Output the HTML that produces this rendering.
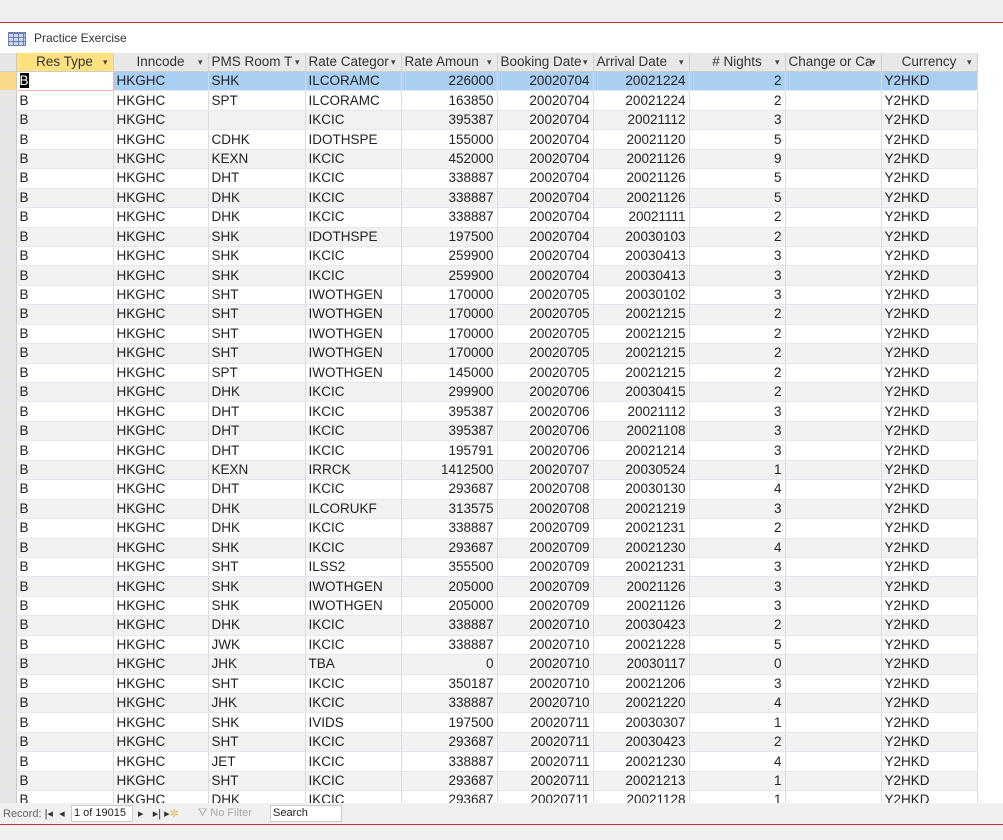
<!DOCTYPE html>
<html><head><meta charset="utf-8"><style>
body{margin:0;width:1003px;height:840px;background:#f0f0f0;font-family:"Liberation Sans",sans-serif;position:relative;overflow:hidden}
#top{position:absolute;left:0;top:0;width:1003px;height:22px;background:#efefef;border-bottom:1px solid #c4323a}
#title{position:absolute;left:0;top:23px;width:1003px;height:30px;background:#fff;border-bottom:1px solid #e3b8bb}
#title span{position:absolute;left:34px;top:8px;font-size:12px;color:#333}
#icon{position:absolute;left:8px;top:9px;width:16px;height:12px;border:1px solid #6a7fb0;background:repeating-linear-gradient(90deg,#c9d6ee 0 4px,#6a7fb0 4px 5px);}
#icon:after{content:"";position:absolute;left:0;top:0;right:0;bottom:0;background:repeating-linear-gradient(0deg,transparent 0 3px,#6a7fb0 3px 4px)}
#grid{position:absolute;left:0;top:53px;width:1003px;height:750px;overflow:hidden;background:#fff}
table{border-collapse:collapse;table-layout:fixed;font-size:13.5px;color:#222}
td,th{height:18.45px;padding:0 3px;border-right:1px solid #d6dde8;border-bottom:1px solid #e4e8ee;white-space:nowrap;overflow:hidden;line-height:18px}
th{height:18px;font-weight:normal;background:#e8e8e8;border-bottom:1px solid #ccc;border-right:1px solid #d0d0d0;text-align:center;position:relative;font-size:13.5px;color:#333}
th:after{content:"▾";position:absolute;right:5px;top:0;font-size:9px;color:#444}
th.sel{background:#ffe27f}
th.rs:after{content:""}
td.rs,th.rs{background:#e6e6e6;padding:0;border-right:1px solid #c8c8c8}
tr:nth-child(even) td{background:#f2f2f2}
tr:nth-child(even) td.rs,tr:nth-child(odd) td.rs{background:#e6e6e6}
tr.s td{background:#a9d0f2!important}
tr.s td.rs{background:#fbd98b!important}
tr.s td.c1{background:#fff!important;border:1px solid #f2b7b7}
.r{text-align:right}
#status{position:absolute;left:0;top:803px;width:1003px;height:21px;background:#f0f0f0;border-bottom:1px solid #c4323a;font-size:11px;color:#666}
#status .t{position:absolute;top:4px}
#rec{position:absolute;left:71px;top:2px;width:58px;height:15px;background:#fff;border:1px solid #ccc;font-size:11px;color:#222;line-height:15px;padding-left:2px}
#srch{position:absolute;left:270px;top:2px;width:68px;height:15px;background:#fff;border:1px solid #ccc;font-size:11px;color:#222;line-height:15px;padding-left:2px}
#bot{position:absolute;left:0;top:825px;width:1003px;height:15px;background:#efefef}
</style></head><body>
<div id="top"></div>
<div id="title"><div id="icon"></div><span>Practice Exercise</span></div>
<div id="grid"><table>
<colgroup><col style="width:16px"><col style="width:97px"><col style="width:95px"><col style="width:97px"><col style="width:96px"><col style="width:96px"><col style="width:96px"><col style="width:96px"><col style="width:96px"><col style="width:96px"><col style="width:96px"></colgroup>
<tr><th class="rs"></th><th class="sel">Res Type</th><th>Inncode</th><th style="text-align:left">PMS Room T</th><th style="text-align:left">Rate Categor</th><th style="text-align:left">Rate Amoun</th><th style="text-align:left">Booking Date</th><th style="text-align:left">Arrival Date</th><th>#&nbsp;Nights</th><th style="text-align:left">Change or Ca</th><th>Currency</th></tr>
<tr class="s"><td class="rs"></td><td class="c1"><span style="background:#000;color:#fff">B</span></td><td>HKGHC</td><td>SHK</td><td>ILCORAMC</td><td class="r">226000</td><td class="r">20020704</td><td class="r">20021224</td><td class="r">2</td><td></td><td>Y2HKD</td></tr>
<tr><td class="rs"></td><td>B</td><td>HKGHC</td><td>SPT</td><td>ILCORAMC</td><td class="r">163850</td><td class="r">20020704</td><td class="r">20021224</td><td class="r">2</td><td></td><td>Y2HKD</td></tr>
<tr><td class="rs"></td><td>B</td><td>HKGHC</td><td></td><td>IKCIC</td><td class="r">395387</td><td class="r">20020704</td><td class="r">20021112</td><td class="r">3</td><td></td><td>Y2HKD</td></tr>
<tr><td class="rs"></td><td>B</td><td>HKGHC</td><td>CDHK</td><td>IDOTHSPE</td><td class="r">155000</td><td class="r">20020704</td><td class="r">20021120</td><td class="r">5</td><td></td><td>Y2HKD</td></tr>
<tr><td class="rs"></td><td>B</td><td>HKGHC</td><td>KEXN</td><td>IKCIC</td><td class="r">452000</td><td class="r">20020704</td><td class="r">20021126</td><td class="r">9</td><td></td><td>Y2HKD</td></tr>
<tr><td class="rs"></td><td>B</td><td>HKGHC</td><td>DHT</td><td>IKCIC</td><td class="r">338887</td><td class="r">20020704</td><td class="r">20021126</td><td class="r">5</td><td></td><td>Y2HKD</td></tr>
<tr><td class="rs"></td><td>B</td><td>HKGHC</td><td>DHK</td><td>IKCIC</td><td class="r">338887</td><td class="r">20020704</td><td class="r">20021126</td><td class="r">5</td><td></td><td>Y2HKD</td></tr>
<tr><td class="rs"></td><td>B</td><td>HKGHC</td><td>DHK</td><td>IKCIC</td><td class="r">338887</td><td class="r">20020704</td><td class="r">20021111</td><td class="r">2</td><td></td><td>Y2HKD</td></tr>
<tr><td class="rs"></td><td>B</td><td>HKGHC</td><td>SHK</td><td>IDOTHSPE</td><td class="r">197500</td><td class="r">20020704</td><td class="r">20030103</td><td class="r">2</td><td></td><td>Y2HKD</td></tr>
<tr><td class="rs"></td><td>B</td><td>HKGHC</td><td>SHK</td><td>IKCIC</td><td class="r">259900</td><td class="r">20020704</td><td class="r">20030413</td><td class="r">3</td><td></td><td>Y2HKD</td></tr>
<tr><td class="rs"></td><td>B</td><td>HKGHC</td><td>SHK</td><td>IKCIC</td><td class="r">259900</td><td class="r">20020704</td><td class="r">20030413</td><td class="r">3</td><td></td><td>Y2HKD</td></tr>
<tr><td class="rs"></td><td>B</td><td>HKGHC</td><td>SHT</td><td>IWOTHGEN</td><td class="r">170000</td><td class="r">20020705</td><td class="r">20030102</td><td class="r">3</td><td></td><td>Y2HKD</td></tr>
<tr><td class="rs"></td><td>B</td><td>HKGHC</td><td>SHT</td><td>IWOTHGEN</td><td class="r">170000</td><td class="r">20020705</td><td class="r">20021215</td><td class="r">2</td><td></td><td>Y2HKD</td></tr>
<tr><td class="rs"></td><td>B</td><td>HKGHC</td><td>SHT</td><td>IWOTHGEN</td><td class="r">170000</td><td class="r">20020705</td><td class="r">20021215</td><td class="r">2</td><td></td><td>Y2HKD</td></tr>
<tr><td class="rs"></td><td>B</td><td>HKGHC</td><td>SHT</td><td>IWOTHGEN</td><td class="r">170000</td><td class="r">20020705</td><td class="r">20021215</td><td class="r">2</td><td></td><td>Y2HKD</td></tr>
<tr><td class="rs"></td><td>B</td><td>HKGHC</td><td>SPT</td><td>IWOTHGEN</td><td class="r">145000</td><td class="r">20020705</td><td class="r">20021215</td><td class="r">2</td><td></td><td>Y2HKD</td></tr>
<tr><td class="rs"></td><td>B</td><td>HKGHC</td><td>DHK</td><td>IKCIC</td><td class="r">299900</td><td class="r">20020706</td><td class="r">20030415</td><td class="r">2</td><td></td><td>Y2HKD</td></tr>
<tr><td class="rs"></td><td>B</td><td>HKGHC</td><td>DHT</td><td>IKCIC</td><td class="r">395387</td><td class="r">20020706</td><td class="r">20021112</td><td class="r">3</td><td></td><td>Y2HKD</td></tr>
<tr><td class="rs"></td><td>B</td><td>HKGHC</td><td>DHT</td><td>IKCIC</td><td class="r">395387</td><td class="r">20020706</td><td class="r">20021108</td><td class="r">3</td><td></td><td>Y2HKD</td></tr>
<tr><td class="rs"></td><td>B</td><td>HKGHC</td><td>DHT</td><td>IKCIC</td><td class="r">195791</td><td class="r">20020706</td><td class="r">20021214</td><td class="r">3</td><td></td><td>Y2HKD</td></tr>
<tr><td class="rs"></td><td>B</td><td>HKGHC</td><td>KEXN</td><td>IRRCK</td><td class="r">1412500</td><td class="r">20020707</td><td class="r">20030524</td><td class="r">1</td><td></td><td>Y2HKD</td></tr>
<tr><td class="rs"></td><td>B</td><td>HKGHC</td><td>DHT</td><td>IKCIC</td><td class="r">293687</td><td class="r">20020708</td><td class="r">20030130</td><td class="r">4</td><td></td><td>Y2HKD</td></tr>
<tr><td class="rs"></td><td>B</td><td>HKGHC</td><td>DHK</td><td>ILCORUKF</td><td class="r">313575</td><td class="r">20020708</td><td class="r">20021219</td><td class="r">3</td><td></td><td>Y2HKD</td></tr>
<tr><td class="rs"></td><td>B</td><td>HKGHC</td><td>DHK</td><td>IKCIC</td><td class="r">338887</td><td class="r">20020709</td><td class="r">20021231</td><td class="r">2</td><td></td><td>Y2HKD</td></tr>
<tr><td class="rs"></td><td>B</td><td>HKGHC</td><td>SHK</td><td>IKCIC</td><td class="r">293687</td><td class="r">20020709</td><td class="r">20021230</td><td class="r">4</td><td></td><td>Y2HKD</td></tr>
<tr><td class="rs"></td><td>B</td><td>HKGHC</td><td>SHT</td><td>ILSS2</td><td class="r">355500</td><td class="r">20020709</td><td class="r">20021231</td><td class="r">3</td><td></td><td>Y2HKD</td></tr>
<tr><td class="rs"></td><td>B</td><td>HKGHC</td><td>SHK</td><td>IWOTHGEN</td><td class="r">205000</td><td class="r">20020709</td><td class="r">20021126</td><td class="r">3</td><td></td><td>Y2HKD</td></tr>
<tr><td class="rs"></td><td>B</td><td>HKGHC</td><td>SHK</td><td>IWOTHGEN</td><td class="r">205000</td><td class="r">20020709</td><td class="r">20021126</td><td class="r">3</td><td></td><td>Y2HKD</td></tr>
<tr><td class="rs"></td><td>B</td><td>HKGHC</td><td>DHK</td><td>IKCIC</td><td class="r">338887</td><td class="r">20020710</td><td class="r">20030423</td><td class="r">2</td><td></td><td>Y2HKD</td></tr>
<tr><td class="rs"></td><td>B</td><td>HKGHC</td><td>JWK</td><td>IKCIC</td><td class="r">338887</td><td class="r">20020710</td><td class="r">20021228</td><td class="r">5</td><td></td><td>Y2HKD</td></tr>
<tr><td class="rs"></td><td>B</td><td>HKGHC</td><td>JHK</td><td>TBA</td><td class="r">0</td><td class="r">20020710</td><td class="r">20030117</td><td class="r">0</td><td></td><td>Y2HKD</td></tr>
<tr><td class="rs"></td><td>B</td><td>HKGHC</td><td>SHT</td><td>IKCIC</td><td class="r">350187</td><td class="r">20020710</td><td class="r">20021206</td><td class="r">3</td><td></td><td>Y2HKD</td></tr>
<tr><td class="rs"></td><td>B</td><td>HKGHC</td><td>JHK</td><td>IKCIC</td><td class="r">338887</td><td class="r">20020710</td><td class="r">20021220</td><td class="r">4</td><td></td><td>Y2HKD</td></tr>
<tr><td class="rs"></td><td>B</td><td>HKGHC</td><td>SHK</td><td>IVIDS</td><td class="r">197500</td><td class="r">20020711</td><td class="r">20030307</td><td class="r">1</td><td></td><td>Y2HKD</td></tr>
<tr><td class="rs"></td><td>B</td><td>HKGHC</td><td>SHT</td><td>IKCIC</td><td class="r">293687</td><td class="r">20020711</td><td class="r">20030423</td><td class="r">2</td><td></td><td>Y2HKD</td></tr>
<tr><td class="rs"></td><td>B</td><td>HKGHC</td><td>JET</td><td>IKCIC</td><td class="r">338887</td><td class="r">20020711</td><td class="r">20021230</td><td class="r">4</td><td></td><td>Y2HKD</td></tr>
<tr><td class="rs"></td><td>B</td><td>HKGHC</td><td>SHT</td><td>IKCIC</td><td class="r">293687</td><td class="r">20020711</td><td class="r">20021213</td><td class="r">1</td><td></td><td>Y2HKD</td></tr>
<tr><td class="rs"></td><td>B</td><td>HKGHC</td><td>DHK</td><td>IKCIC</td><td class="r">293687</td><td class="r">20020711</td><td class="r">20021128</td><td class="r">1</td><td></td><td>Y2HKD</td></tr>
</table></div>
<div id="status">
<span class="t" style="left:3px">Record: <span style="color:#333">|◂ &nbsp;◂</span></span>
<div id="rec">1 of 19015</div>
<span class="t" style="left:138px;color:#333">▸ &nbsp; ▸| ▸<span style="color:#e8b84a">✲</span></span>
<span class="t" style="left:198px;color:#aaa">⛛ No Filter</span>
<div id="srch">Search</div>
</div>
<div id="bot"></div>
</body></html>
